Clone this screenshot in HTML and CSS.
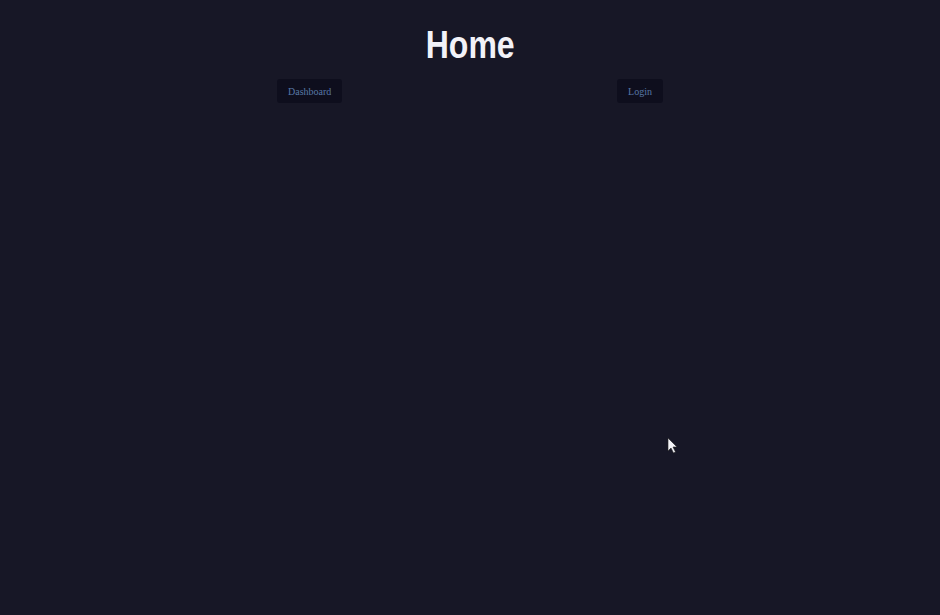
FILE: index.html
```html
<!DOCTYPE html>
<html>
<head>
<meta charset="utf-8">
<title>Home</title>
<link rel="stylesheet" href="styles.css">
</head>
<body>
<main class="page">
  <h1 class="title">Home</h1>
  <nav class="nav">
    <button class="nav-btn">Dashboard</button>
    <button class="nav-btn">Login</button>
  </nav>
</main>
<svg class="cursor" width="12" height="18" viewBox="0 0 12 18"><path d="M1 1 L1 14 L4 11 L6.5 16 L8.5 15 L6 10 L10 10 Z" fill="#f4f4f8" stroke="#222" stroke-width="0.6"/></svg>
</body>
</html>
```
FILE: styles.css
```css
html, body {
  margin: 0;
  height: 100%;
  background: #171726;
}
body {
  position: relative;
  overflow: hidden;
}
.page {
  display: flex;
  flex-direction: column;
  align-items: center;
  padding-top: 22px;
}
.title {
  margin: 0;
  font-family: "Liberation Sans", Arial, sans-serif;
  font-weight: bold;
  font-size: 39px;
  line-height: 45px;
  color: #f2f2f8;
  transform: scaleX(0.82);
}
.nav {
  width: 386px;
  display: flex;
  justify-content: space-between;
  margin-top: 12px;
}
.nav-btn {
  height: 24px;
  padding: 0 11px;
  border: none;
  border-radius: 3px;
  background: #0e0e1d;
  color: #5878a6;
  font-family: "Liberation Serif", "Times New Roman", serif;
  font-size: 10px;
  font-weight: normal;
}
.cursor {
  position: absolute;
  left: 667px;
  top: 437px;
}
```
